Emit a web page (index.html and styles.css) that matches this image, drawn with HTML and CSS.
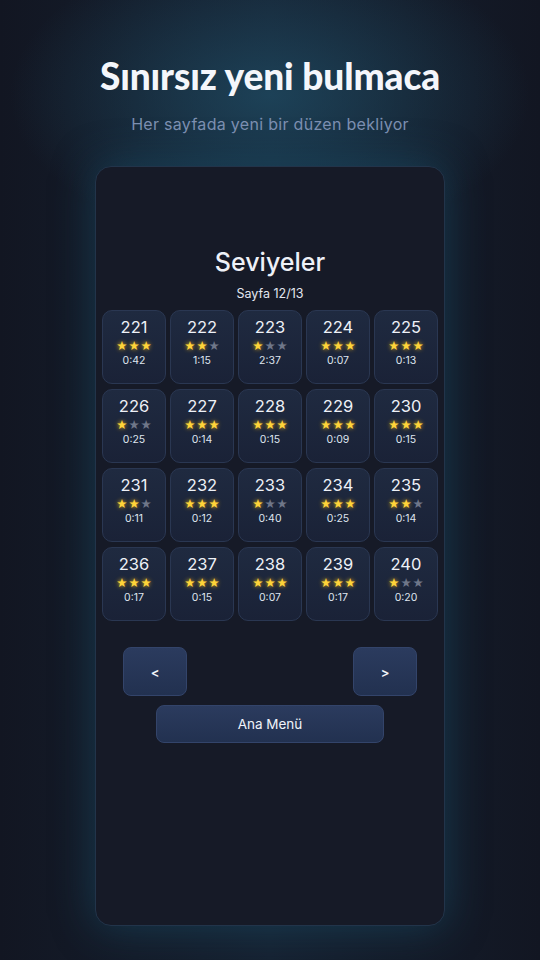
FILE: index.html
```html
<!DOCTYPE html>
<html lang="tr">
<head>
    <meta charset="UTF-8">
    <meta name="viewport" content="width=device-width, initial-scale=1.0">
    <title>Seviyeler</title>
    <link rel="stylesheet" href="styles.css">
</head>
<body>
<div class="screen">
    <header class="hero">
        <h1>Sınırsız yeni bulmaca</h1>
        <p>Her sayfada yeni bir düzen bekliyor</p>
    </header>

    <main class="card">
        <h2>Seviyeler</h2>
        <div class="page">Sayfa 12/13</div>

        <div class="levels" id="levels"></div>

        <div class="nav">
            <button class="btn btn-small">&lt;</button>
            <button class="btn btn-small">&gt;</button>
        </div>
        <button class="btn btn-wide">Ana Menü</button>
    </main>
</div>

<script>
    var levels = [
        [221, 3, '0:42'], [222, 2, '1:15'], [223, 1, '2:37'], [224, 3, '0:07'], [225, 3, '0:13'],
        [226, 1, '0:25'], [227, 3, '0:14'], [228, 3, '0:15'], [229, 3, '0:09'], [230, 3, '0:15'],
        [231, 2, '0:11'], [232, 3, '0:12'], [233, 1, '0:40'], [234, 3, '0:25'], [235, 2, '0:14'],
        [236, 3, '0:17'], [237, 3, '0:15'], [238, 3, '0:07'], [239, 3, '0:17'], [240, 1, '0:20']
    ];

    var grid = document.getElementById('levels');
    var html = '';
    for (var i = 0; i < levels.length; i++) {
        var stars = '';
        for (var s = 0; s < 3; s++) {
            stars += '<span class="star' + (s < levels[i][1] ? ' on' : '') + '">★</span>';
        }
        html += '<div class="tile">' +
            '<div class="num">' + levels[i][0] + '</div>' +
            '<div class="stars">' + stars + '</div>' +
            '<div class="time">' + levels[i][2] + '</div>' +
            '</div>';
    }
    grid.innerHTML = html;
</script>
</body>
</html>
```

FILE: styles.css
```css
* {
    box-sizing: border-box;
}

body {
    margin: 0;
    padding: 0;
    font-family: 'Inter', 'Noto Sans', sans-serif;
    color: #e9edf5;
    background-color: #141925;
}

.screen {
    width: 540px;
    height: 960px;
    overflow: hidden;
    display: flex;
    flex-direction: column;
    align-items: center;
    background:
        radial-gradient(ellipse 260px 150px at 50% 95px, rgba(31, 76, 100, 0.75), rgba(31, 76, 100, 0) 100%),
        linear-gradient(90deg, #121622 0%, #162232 50%, #121622 100%);
}

.hero {
    text-align: center;
    padding-top: 52px;
}

.hero h1 {
    margin: 0;
    font-family: 'Lato', sans-serif;
    font-size: 37px;
    font-weight: 900;
    letter-spacing: -0.1px;
    color: #f4f6fb;
    line-height: 48px;
}

.hero p {
    margin: 14px 0 0;
    font-size: 16px;
    color: #7d90b2;
    letter-spacing: 0.3px;
}

.card {
    margin-top: 32px;
    width: 350px;
    height: 760px;
    background-color: #161a27;
    border: 1px solid #22344a;
    border-radius: 16px;
    box-shadow: 0 0 40px rgba(26, 84, 112, 0.55);
    padding: 78px 6px 0;
    display: flex;
    flex-direction: column;
    align-items: center;
}

.card h2 {
    margin: 0;
    font-size: 25px;
    font-weight: 500;
    line-height: 34px;
    color: #eef1f7;
}

.page {
    margin-top: 7px;
    font-size: 12.5px;
    color: #e3e7f0;
}

.levels {
    margin-top: 9px;
    display: grid;
    grid-template-columns: repeat(5, 64px);
    grid-auto-rows: 74px;
    gap: 5px 4px;
}

.tile {
    background: linear-gradient(180deg, #1f2a40 0%, #1a2237 100%);
    border: 1px solid #2a3752;
    border-radius: 10px;
    display: flex;
    flex-direction: column;
    align-items: center;
    padding-top: 6px;
}

.num {
    font-size: 16.5px;
    line-height: 20px;
    color: #eef1f7;
}

.stars {
    display: flex;
    gap: 1px;
    margin-top: 1px;
    height: 15px;
    line-height: 15px;
}

.star {
    font-family: 'DejaVu Sans', sans-serif;
    font-size: 12.5px;
    color: #6f7689;
}

.star.on {
    color: #ffd43a;
    text-shadow: 0 0 4px rgba(255, 190, 20, 0.9);
}

.time {
    margin-top: 1px;
    font-size: 10.5px;
    color: #dfe4ee;
}

.nav {
    width: 294px;
    margin-top: 26px;
    display: flex;
    justify-content: space-between;
}

.btn {
    font-family: inherit;
    color: #f0f3f9;
    background: linear-gradient(180deg, #2b3b5e 0%, #223150 100%);
    border: 1px solid #33446a;
    border-radius: 8px;
    cursor: pointer;
}

.btn-small {
    width: 64px;
    height: 49px;
    font-size: 13px;
    font-weight: 600;
}

.btn-wide {
    margin-top: 9px;
    width: 228px;
    height: 38px;
    font-size: 13.5px;
    font-weight: 400;
}
```
